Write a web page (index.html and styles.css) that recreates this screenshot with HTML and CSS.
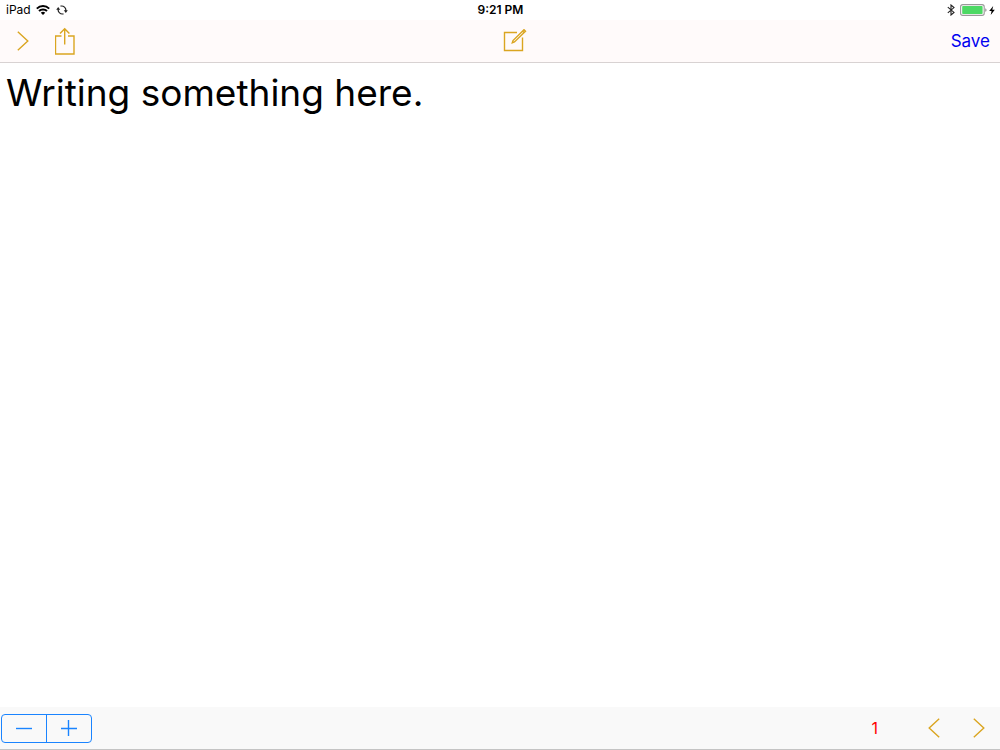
FILE: index.html
```
<!DOCTYPE html>
<html lang="en">
<head>
  <meta charset="UTF-8">
  <title>Notes</title>
  <meta name="viewport" content="width=device-width, initial-scale=1.0">
  <link rel="stylesheet" href="styles.css">
</head>
<body>

  <div class="status-bar">
    <div class="status-left">
      <span>iPad</span>
      <svg width="14" height="10" viewBox="0 0 14 10">
        <path d="M.8 3.6a9 9 0 0 1 12.4 0M3 6a5.8 5.8 0 0 1 8 0" fill="none" stroke="#000" stroke-width="2"/>
        <path d="M7 10 4.8 7.7a3.2 3.2 0 0 1 4.4 0z"/>
      </svg>
      <svg class="sync" width="12" height="10" viewBox="0 0 12 10">
        <path d="M4.5 1.2A4.2 4.2 0 0 1 9.8 6M7.5 8.8A4.2 4.2 0 0 1 2.2 4" fill="none" stroke="#222" stroke-width="1.2"/>
        <path d="M7.8 5.2h4L9.8 8zM.2 4.8h4L2.2 2z" fill="#222"/>
      </svg>
    </div>
    <time class="clock">9:21 PM</time>
    <div class="status-right">
      <svg width="8" height="12" viewBox="0 0 8 12">
        <path d="M.8 3.2 7 8.4 4 11V1l3 2.6L.8 8.8" fill="none" stroke="#222" stroke-width="1.1"/>
      </svg>
      <svg width="27" height="12" viewBox="0 0 27 12">
        <rect x=".6" y=".6" width="23.6" height="10.8" rx="2.2" fill="#fff" stroke="#999" stroke-width="1.1"/>
        <rect x="2.2" y="2" width="20.4" height="8" rx=".8" fill="#4cd964"/>
        <path d="M25.2 4.2q1.4.4 1.4 1.8t-1.4 1.8z" fill="#999"/>
      </svg>
      <svg width="6" height="9" viewBox="0 0 6 9">
        <path d="M4.2 0 .2 5h2.4L1.7 9l4.1-5.3H3.3z"/>
      </svg>
    </div>
  </div>

  <header class="toolbar">
    <div class="toolbar-left">
      <button class="icon-btn" aria-label="Forward">
        <svg width="12" height="20" viewBox="0 0 12 20">
          <path d="m.8.8 10 9.2-10 9.2"/>
        </svg>
      </button>
      <button class="icon-btn" aria-label="Share">
        <svg width="20" height="28" viewBox="0 0 20 28">
          <path d="M6.5 9h-6v18h18.500V9h-6M9.700 17.500V2M5 6.500l4.700-4.800 4.700 4.800"/>
        </svg>
      </button>
    </div>
    <button class="icon-btn" aria-label="New note">
      <svg width="24" height="24" viewBox="0 0 24 24">
        <path d="M14 3.500H1.500v18h18V8.500"/>
        <path d="M9.300 13.800 10 11.500 21 .700l1.500 1.500L11.500 13zM19.500 2l1.600 1.600"/>
      </svg>
    </button>
    <button class="save-btn">Save</button>
  </header>

  <textarea class="note" aria-label="Note text" spellcheck="false">Writing something here.</textarea>

  <footer class="bottom-bar">
    <div class="stepper">
      <button aria-label="Smaller text">
        <svg width="16" height="16" viewBox="0 0 16 16"><path d="M0 8.500h16"/></svg>
      </button>
      <button aria-label="Larger text">
        <svg width="16" height="16" viewBox="0 0 16 16"><path d="M0 8.500h16M7.500 0v16"/></svg>
      </button>
    </div>
    <div class="pager">
      <span class="page-number">1</span>
      <button class="icon-btn" aria-label="Previous page">
        <svg width="12" height="20" viewBox="0 0 12 20">
          <path d="M11.200.8 1.200 10l10 9.200"/>
        </svg>
      </button>
      <button class="icon-btn" aria-label="Next page">
        <svg width="12" height="20" viewBox="0 0 12 20">
          <path d="m.8.8 10 9.200-10 9.200"/>
        </svg>
      </button>
    </div>
  </footer>

</body>
</html>
```
FILE: styles.css
```
* {
  box-sizing: border-box;
}

body {
  margin: 0;
  height: 100vh;
  display: flex;
  flex-direction: column;
  font-family: Inter, "Liberation Sans", sans-serif;
  background-color: #fff;
  color: #000;
}

svg {
  display: block;
}

button {
  padding: 0;
  border: none;
  background: none;
  font-family: inherit;
  cursor: pointer;
}

/* status bar */
.status-bar {
  display: grid;
  grid-template-columns: 1fr auto 1fr;
  align-items: center;
  height: 20px;
  padding: 0 5px 0 6px;
  font-size: 12px;
  line-height: 20px;
}

.status-left {
  display: flex;
  align-items: center;
  gap: 5px;
}

.sync {
  margin-left: 1px;
}

.clock {
  font-weight: 600;
}

.status-right {
  display: flex;
  align-items: center;
  justify-content: flex-end;
  gap: 2px;
}

.status-right svg:first-child {
  margin-right: 3px;
}

/* top toolbar */
.toolbar {
  display: flex;
  align-items: center;
  justify-content: space-between;
  height: 43px;
  padding: 0 10px 0 17px;
  background-color: #fffafa;
  border-bottom: 1px solid #d8d2d2;
}

.toolbar-left {
  display: flex;
  align-items: center;
  gap: 26px;
  padding-right: 4px;
}

.icon-btn svg {
  fill: none;
  stroke: #daa520;
  stroke-width: 1.4;
}

.save-btn {
  color: #0000f0;
  font-size: 17px;
  line-height: 24px;
}

/* writing area */
.note {
  flex: 1;
  width: 100%;
  padding: 7px 6px;
  border: none;
  outline: none;
  resize: none;
  background-color: #fff;
  color: #000;
  font-family: inherit;
  font-size: 37px;
  line-height: 45px;
}

/* bottom toolbar */
.bottom-bar {
  display: flex;
  align-items: center;
  justify-content: space-between;
  height: 43px;
  padding: 0 15px 0 1px;
  background-color: #f9f9f9;
  border-bottom: 1px solid #c4c4c4;
}

.stepper {
  display: flex;
  height: 29px;
  border: 1px solid #1a84ff;
  border-radius: 4px;
}

.stepper button {
  display: flex;
  align-items: center;
  justify-content: center;
  width: 44px;
}

.stepper button:first-child {
  width: 45px;
  border-right: 1px solid #1a84ff;
}

.stepper svg {
  stroke: #1a84ff;
  stroke-width: 1.4;
}

.pager {
  display: flex;
  align-items: center;
  gap: 33px;
}

.page-number {
  margin-right: 17px;
  color: #f00;
  font-size: 16px;
}
```
